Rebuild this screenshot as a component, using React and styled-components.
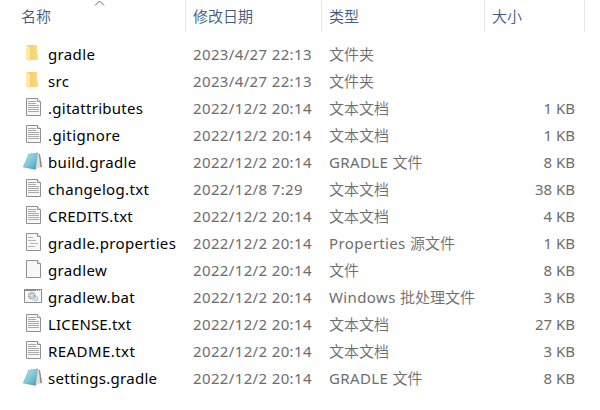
import React from 'react';
import styled, { createGlobalStyle } from 'styled-components';

const GlobalStyle = createGlobalStyle`
  * { box-sizing: border-box; }
  body { margin: 0; background: #fff; }
`;

const Explorer = styled.main`
  width: 600px;
  height: 410px;
  overflow: hidden;
  background: #fff;
  font: 15px/27px "Noto Sans", "Noto Sans CJK SC DemiLight", "Noto Sans CJK SC Light", "Noto Sans CJK SC", sans-serif;
`;

const Columns = styled.div`
  display: grid;
  grid-template-columns: 186px 136px 163px 100px;
`;

const Header = styled(Columns)`
  height: 32px;
  margin-bottom: 9px;
  color: #435a7c;
  line-height: 32px;
`;

const HeaderCell = styled.div`
  position: relative;
  padding-left: ${({ $first }) => ($first ? 21 : 7)}px;
  border-right: 1px solid #e5e5e5;
  white-space: nowrap;
`;

const SortMark = styled.svg`
  position: absolute;
  top: 0;
  left: 94px;
`;

const Row = styled(Columns)`
  height: 27px;
  color: #6d6d6d;
`;

const NameCell = styled.div`
  display: flex;
  gap: 5px;
  padding-left: 23px;
  color: #000;
`;

const IconBox = styled.svg`
  flex: none;
  width: 20px;
  height: 20px;
  margin-top: 3px;
`;

const Label = styled.span`
  white-space: nowrap;
  letter-spacing: ${({ $track }) => $track || 0}px;
`;

const Cell = styled.div`
  padding-left: 7px;
  white-space: nowrap;
`;

const SizeCell = styled(Cell)`
  padding: 0 10px 0 0;
  text-align: right;
`;

function Page({ children }) {
  return (
    <>
      <path d="M3.5 0.5H14.5L17.5 3.5V17.5H3.5Z" fill="#f8f8f8" stroke="#909090" />
      <path d="M14.5 0.5V3.5H17.5" fill="#fff" stroke="#909090" />
      {children}
    </>
  );
}

const drawings = {
  folder: (
    <>
      <defs>
        <linearGradient id="folderBack" x1="0" y1="0" x2="1" y2="0">
          <stop stopColor="#e9c25c" />
          <stop offset=".4" stopColor="#f5d374" />
          <stop offset="1" stopColor="#f9dc88" />
        </linearGradient>
      </defs>
      <path d="M4 1H14V10H15V16H6Z" fill="url(#folderBack)" />
      <path d="M3 1H4.5L7 3V18L3 15.5Z" fill="#ffe9a8" />
    </>
  ),
  text: (
    <Page>
      <path d="M5 3.5H13M5 5.5H13M5 7.5H16M5 9.5H16M5 11.5H16M5 13.5H16" stroke="#a9a9a9" />
    </Page>
  ),
  properties: (
    <Page>
      <path d="M5 4.5H10M5 7.5H13M7 10.5H15M5 13.5H12" stroke="#b5b5b5" />
    </Page>
  ),
  blank: <Page />,
  gradle: (
    <>
      <defs>
        <linearGradient id="pad" x1="0" y1="0" x2="1" y2="1">
          <stop stopColor="#b9e2ea" />
          <stop offset=".55" stopColor="#7cc5d5" />
          <stop offset="1" stopColor="#3d9bb3" />
        </linearGradient>
      </defs>
      <path d="M14 0.8L17 2.4L19 14.8L12 17.6Z" fill="#dddcd6" />
      <path d="M15.8 1.6L17 2.4L19 14.8L17.6 15.6Z" fill="#8e8475" />
      <path d="M5 2.6L15 0.8L12.6 17.4L0 14.8Z" fill="url(#pad)" />
      <path d="M5 2.4L15.4 0.9" stroke="#8fa4a6" strokeDasharray="1 .6" />
      <path d="M0.2 14.8L12.6 17.4" stroke="#4590a0" strokeWidth=".6" />
    </>
  ),
  batch: (
    <>
      <path d="M1.5 2.5H18.5V15.5H1.5Z" fill="#f7f8f8" stroke="#8c8c8c" />
      <path d="M1 3H19" stroke="#8c8c8c" strokeWidth="2" />
      <path d="M13 3.5H14M15 3.5H16M17 3.5H18" stroke="#fff" />
      <circle cx="8.8" cy="8.7" r="3" fill="#eee" stroke="#8a939a" strokeWidth="1.7" strokeDasharray="1.2 .7" />
      <circle cx="8.8" cy="8.7" r="1.1" fill="#fff" stroke="#919ba2" strokeWidth=".6" />
      <circle cx="12.7" cy="11.6" r="1.9" fill="#eef8ff" stroke="#88b7d9" strokeWidth="1.5" strokeDasharray="1.2 .6" />
    </>
  ),
};

const files = [
  ['folder', 'gradle', 0.35, '2023/4/27 22:13', '文件夹', ''],
  ['folder', 'src', 0.3, '2023/4/27 22:13', '文件夹', ''],
  ['text', '.gitattributes', 0.27, '2022/12/2 20:14', '文本文档', '1 KB'],
  ['text', '.gitignore', 0.4, '2022/12/2 20:14', '文本文档', '1 KB'],
  ['gradle', 'build.gradle', 0.33, '2022/12/2 20:14', 'GRADLE 文件', '8 KB'],
  ['text', 'changelog.txt', 0.34, '2022/12/8 7:29', '文本文档', '38 KB'],
  ['text', 'CREDITS.txt', 0.22, '2022/12/2 20:14', '文本文档', '4 KB'],
  ['properties', 'gradle.properties', 0.36, '2022/12/2 20:14', 'Properties 源文件', '1 KB'],
  ['blank', 'gradlew', 0.35, '2022/12/2 20:14', '文件', '8 KB'],
  ['batch', 'gradlew.bat', 0.36, '2022/12/2 20:14', 'Windows 批处理文件', '3 KB'],
  ['text', 'LICENSE.txt', 0.16, '2022/12/2 20:14', '文本文档', '27 KB'],
  ['text', 'README.txt', 0.44, '2022/12/2 20:14', '文本文档', '3 KB'],
  ['gradle', 'settings.gradle', 0.28, '2022/12/2 20:14', 'GRADLE 文件', '8 KB'],
];

function FileType({ value }) {
  const [latin, rest] = value.includes(' ') ? value.split(/(?<= )/) : ['', value];
  return (
    <>
      <Label $track={0.38}>{latin}</Label>
      {rest}
    </>
  );
}

export default function App() {
  return (
    <Explorer>
      <GlobalStyle />
      <Header>
        <HeaderCell $first>
          名称
          <SortMark width="11" height="7" viewBox="0 0 11 7" fill="none">
            <path d="M1 5.5L5.5 1L10 5.5" stroke="#666" />
          </SortMark>
        </HeaderCell>
        <HeaderCell>修改日期</HeaderCell>
        <HeaderCell>类型</HeaderCell>
        <HeaderCell>大小</HeaderCell>
      </Header>
      {files.map(([icon, name, track, date, type, size]) => (
        <Row key={name}>
          <NameCell>
            <IconBox viewBox="0 0 20 20" fill="none">{drawings[icon]}</IconBox>
            <Label $track={track}>{name}</Label>
          </NameCell>
          <Cell><Label $track={0.36}>{date}</Label></Cell>
          <Cell><FileType value={type} /></Cell>
          <SizeCell>{size}</SizeCell>
        </Row>
      ))}
    </Explorer>
  );
}
